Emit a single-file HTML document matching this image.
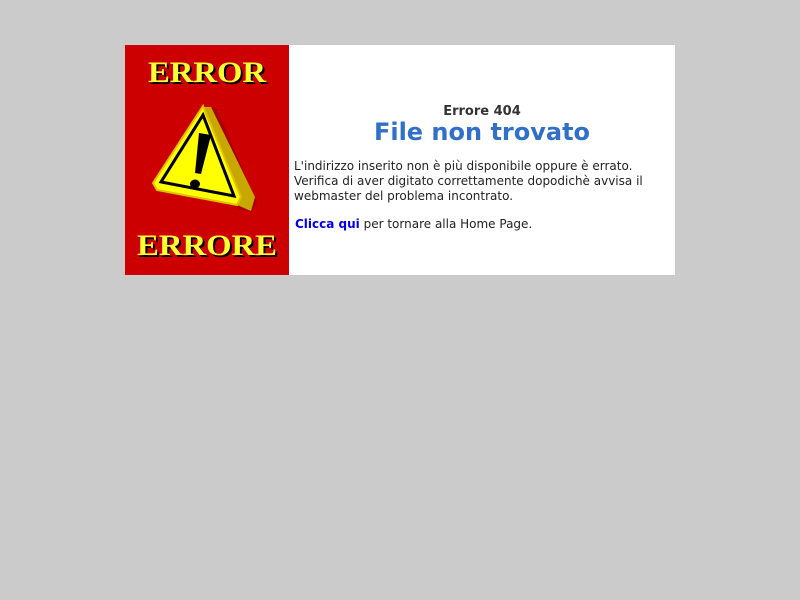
<!DOCTYPE html>
<html><head><meta charset="utf-8"><style>
body{margin:0;background:#cbcbcb;width:800px;height:600px;overflow:hidden;font-family:"DejaVu Sans","Liberation Sans",sans-serif;}
.box{position:absolute;left:125px;top:45px;width:550px;height:230px;background:#fff;}
.img{position:absolute;left:0;top:0;width:164px;height:230px;background:#cc0000;}
.t{position:absolute;left:164px;width:386px;text-align:center;}
p{margin:0;position:absolute;left:169px;font-size:12px;line-height:15px;color:#222;white-space:nowrap;}
</style></head><body>
<div class="box">
<div class="img"><svg width="164" height="230" viewBox="0 0 164 230">
<g font-family="Liberation Serif,serif" font-weight="bold" text-anchor="middle">
<text x="84" y="39" font-size="30" fill="#000" textLength="118" lengthAdjust="spacingAndGlyphs">ERROR</text>
<text x="82" y="37" font-size="30" fill="#ffff33" textLength="118" lengthAdjust="spacingAndGlyphs">ERROR</text>
<text x="84" y="212" font-size="30" fill="#000" textLength="140" lengthAdjust="spacingAndGlyphs">ERRORE</text>
<text x="82" y="210" font-size="30" fill="#ffff33" textLength="140" lengthAdjust="spacingAndGlyphs">ERRORE</text>
</g>
<polygon points="84,62 92,64 132,158 126,167 112,164" fill="#8a0000" opacity="0.5"/>
<polygon points="78,62 86,62 130,152 126,166 112,160" fill="#c8a800"/>
<polygon points="78,61 28,138 32,145 112,160 116,152" fill="#ffff00" stroke="#e0c000" stroke-width="2"/>
<polygon points="78,70 36,137 109,151" fill="none" stroke="#000" stroke-width="3"/>
<path d="M74,88 L86,90 L76,129 L70,128 Z" fill="#000"/>
<ellipse cx="70" cy="139" rx="5" ry="4.5" fill="#000"/>
</svg></div>
<div class="t" style="top:59px;font-size:13px;font-weight:bold;color:#333;">Errore 404</div>
<div class="t" style="top:73px;font-size:24px;font-weight:bold;color:#3070c8;">File non trovato</div>
<p style="top:114px">L'indirizzo inserito non è più disponibile oppure è errato.<br>Verifica di aver digitato correttamente dopodichè avvisa il<br>webmaster del problema incontrato.</p>
<p style="top:172px;left:170px"><b style="color:#0000ee">Clicca qui</b> per tornare alla Home Page.</p>
</div>
</body></html>
